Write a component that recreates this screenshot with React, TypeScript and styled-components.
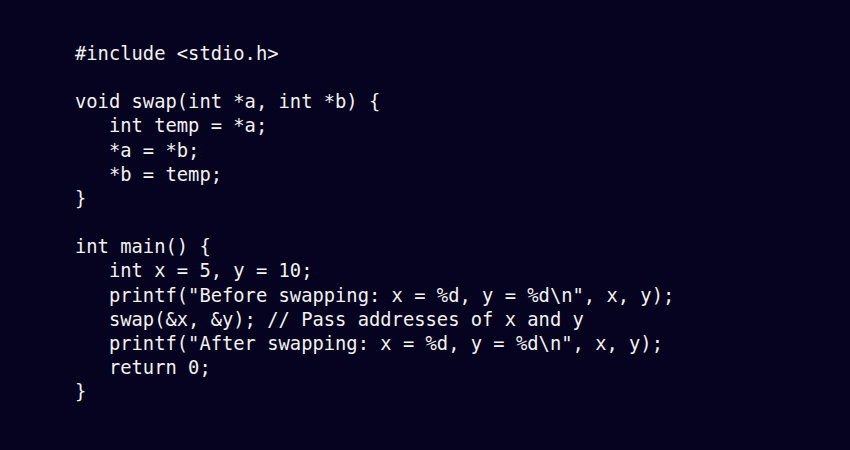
import React from "react";
import styled, { createGlobalStyle } from "styled-components";

const Global = createGlobalStyle`
  html, body { margin: 0; padding: 0; background: #05031f; }
  #root { width: 850px; height: 450px; }
`;

const Page = styled.div`
  width: 850px;
  height: 450px;
  box-sizing: border-box;
  background: #05031f;
  padding: 42px 0 0 75px;
`;

const Code = styled.pre`
  margin: 0;
  font-family: "DejaVu Sans Mono", "Liberation Mono", monospace;
  font-size: 18.8px;
  line-height: 24.15px;
  color: #f2f2f2;
  letter-spacing: 0;
`;

const code = `#include <stdio.h>

void swap(int *a, int *b) {
   int temp = *a;
   *a = *b;
   *b = temp;
}

int main() {
   int x = 5, y = 10;
   printf("Before swapping: x = %d, y = %d\\n", x, y);
   swap(&x, &y); // Pass addresses of x and y
   printf("After swapping: x = %d, y = %d\\n", x, y);
   return 0;
}`;

export default function App() {
  return (
    <>
      <Global />
      <Page>
        <Code>{code}</Code>
      </Page>
    </>
  );
}
